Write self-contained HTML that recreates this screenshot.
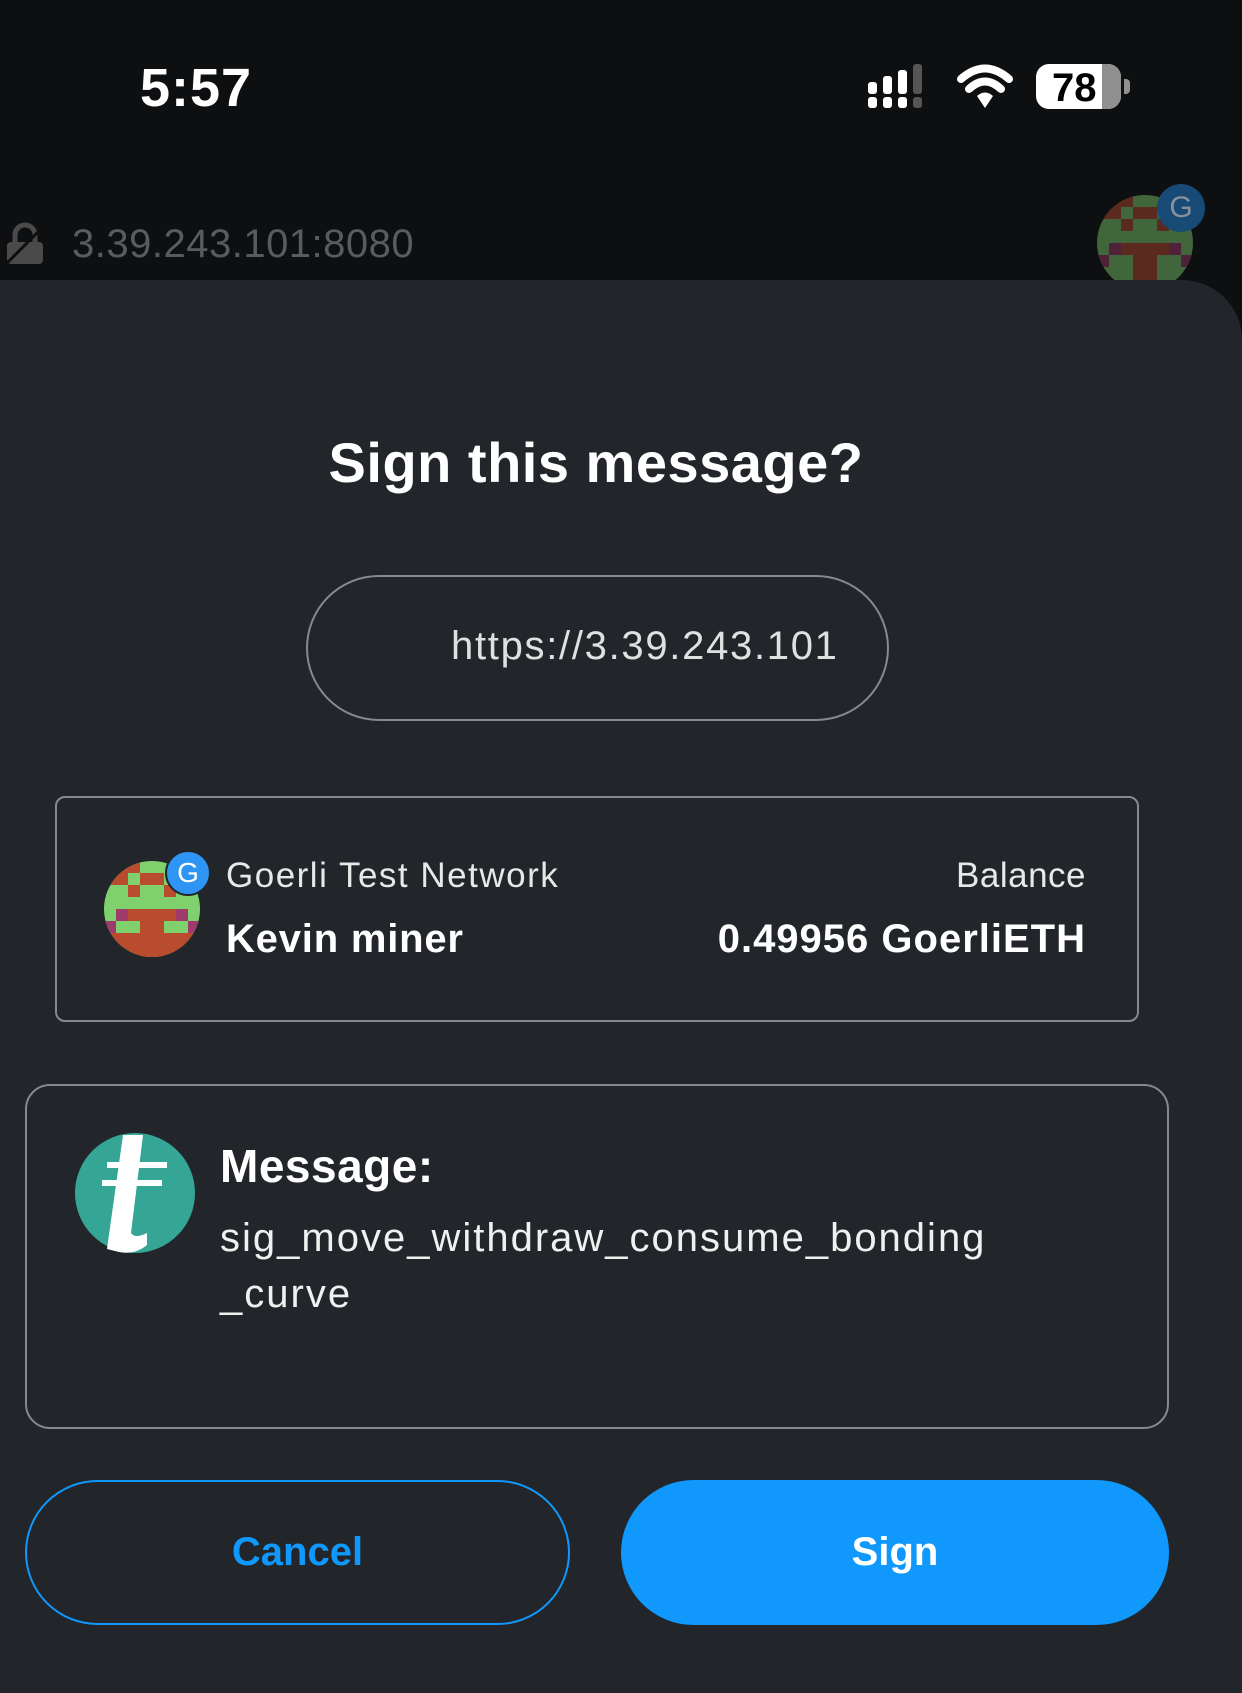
<!DOCTYPE html>
<html><head><meta charset="utf-8"><style>
*{margin:0;padding:0;box-sizing:border-box}
body{width:1242px;height:1693px;background:#0e0f11;font-family:"Liberation Sans",sans-serif;position:relative;overflow:hidden;color:#fff}
.a{position:absolute}
.sheet{left:0;top:280px;width:1242px;height:1413px;background:#222529;border-radius:0 60px 0 0}
</style></head><body>
<div class="a" style="left:140px;top:57px;font-size:54px;font-weight:bold;letter-spacing:1px">5:57</div>
<svg class="a" style="left:866px;top:64px" width="70" height="46" viewBox="0 0 70 46">
<g fill="#fff"><rect x="2" y="18" width="9" height="12" rx="3"/><rect x="2" y="33" width="9" height="11" rx="3"/>
<rect x="17" y="12" width="9" height="18" rx="3"/><rect x="17" y="33" width="9" height="11" rx="3"/>
<rect x="32" y="6" width="9" height="24" rx="3"/><rect x="32" y="33" width="9" height="11" rx="3"/></g>
<g fill="#555"><rect x="47" y="0" width="9" height="30" rx="3"/><rect x="47" y="33" width="9" height="11" rx="3"/></g>
</svg>
<svg class="a" style="left:955px;top:64px" width="60" height="44" viewBox="0 0 60 44">
<path d="M30 44 L22 32 Q30 25 38 32 Z" fill="#fff"/>
<path d="M14 25 Q30 10 46 25" stroke="#fff" stroke-width="8" fill="none" stroke-linecap="round"/>
<path d="M6 15 Q30 -6 54 15" stroke="#fff" stroke-width="8" fill="none" stroke-linecap="round"/>
</svg>
<div class="a" style="left:1036px;top:64px;width:85px;height:45px;border-radius:13px;background:#fff;overflow:hidden">
<div class="a" style="left:66px;top:0;width:20px;height:45px;background:#909090"></div>
<div class="a" style="left:16px;top:2px;font-size:40px;font-weight:bold;color:#000">78</div></div>
<div class="a" style="left:1124px;top:79px;width:6px;height:15px;border-radius:0 4px 4px 0;background:#909090"></div>

<svg class="a" style="left:4px;top:222px" width="44" height="44" viewBox="0 0 44 44"><rect x="3" y="20" width="36" height="22" rx="4" fill="#4a4a4a"/><path d="M11 20 V13 a10 10 0 0 1 20 0 V20" stroke="#4a4a4a" stroke-width="5" fill="none"/><path d="M2 42 L40 4" stroke="#0e0f11" stroke-width="3"/></svg>
<div class="a" style="left:72px;top:222px;font-size:40px;color:#5a5b5e;letter-spacing:0.5px">3.39.243.101:8080</div>

<svg class="a" style="left:1097px;top:195px;opacity:.45" width="96" height="96" viewBox="0 0 8 8"><defs><clipPath id="c1"><circle cx="4" cy="4" r="4"/></clipPath></defs>
<g clip-path="url(#c1)"><rect width="8" height="8" fill="#7fd16e"/><g fill="#b94c2e"><rect x="0" y="0" width="3" height="1"/><rect x="0" y="1" width="2" height="1"/><rect x="3" y="1" width="2" height="1"/><rect x="2" y="2" width="1" height="1"/><rect x="5" y="2" width="1" height="1"/><rect x="2" y="4" width="4" height="1"/><rect x="3" y="5" width="2" height="3"/><rect x="0" y="0" width="1" height="2"/></g><g fill="#a03a6a"><rect x="1" y="4" width="1" height="1"/><rect x="6" y="4" width="1" height="1"/><rect x="0" y="5" width="1" height="1"/><rect x="7" y="5" width="1" height="1"/></g></g></svg>
<div class="a" style="left:1157px;top:184px;width:48px;height:48px;border-radius:50%;background:#174b75;color:#8a9099;font-size:30px;text-align:center;line-height:48px">G</div>

<div class="a sheet"></div>
<div class="a" style="left:0;width:1192px;top:430px;text-align:center;font-size:56px;font-weight:bold;letter-spacing:0.5px">Sign this message?</div>
<div class="a" style="left:306px;top:575px;width:583px;height:146px;border:2px solid #858a90;border-radius:73px"></div>
<div class="a" style="left:451px;top:624px;font-size:40px;color:#e0e0e0;letter-spacing:1.7px">https://3.39.243.101</div>

<div class="a" style="left:55px;top:796px;width:1084px;height:226px;border:2px solid #858a90;border-radius:10px"></div>
<svg class="a" style="left:104px;top:861px" width="96" height="96" viewBox="0 0 8 8"><defs><clipPath id="c2"><circle cx="4" cy="4" r="4"/></clipPath></defs>
<g clip-path="url(#c2)"><rect width="8" height="8" fill="#7fd16e"/><g fill="#b94c2e"><rect x="0" y="0" width="3" height="1"/><rect x="0" y="1" width="2" height="1"/><rect x="3" y="1" width="2" height="1"/><rect x="2" y="2" width="1" height="1"/><rect x="5" y="2" width="1" height="1"/><rect x="2" y="4" width="4" height="1"/><rect x="3" y="5" width="2" height="3"/><rect x="0" y="6" width="8" height="2"/></g><g fill="#a03a6a"><rect x="1" y="4" width="1" height="1"/><rect x="6" y="4" width="1" height="1"/><rect x="0" y="5" width="1" height="1"/><rect x="7" y="5" width="1" height="1"/></g></g></svg>
<div class="a" style="left:165px;top:850px;width:46px;height:46px;border-radius:50%;background:#2f95f5;border:2px solid #222529;color:#fff;font-size:28px;text-align:center;line-height:42px">G</div>
<div class="a" style="left:226px;top:856px;font-size:35px;color:#e8e8e8;letter-spacing:1.5px">Goerli Test Network</div>
<div class="a" style="left:226px;top:917px;font-size:40px;font-weight:bold;letter-spacing:0.8px">Kevin miner</div>
<div class="a" style="right:156px;top:856px;font-size:35px;color:#e8e8e8;letter-spacing:0.5px">Balance</div>
<div class="a" style="right:156px;top:917px;font-size:40px;font-weight:bold;letter-spacing:1px">0.49956 GoerliETH</div>

<div class="a" style="left:25px;top:1084px;width:1144px;height:345px;border:2px solid #858a90;border-radius:25px"></div>
<svg class="a" style="left:75px;top:1133px" width="120" height="120" viewBox="0 0 120 120"><defs><clipPath id="c3"><rect x="-10" y="0" width="140" height="120"/></clipPath></defs><circle cx="60" cy="60" r="60" fill="#35a596"/>
<path d="M48 2 L68 2 L56 100 Q60 106 72 100 L72 112 Q60 122 44 119 L32 116 Z" fill="#fff"/>
<rect x="32" y="29" width="60" height="6" fill="#fff"/><rect x="27" y="47" width="60" height="6" fill="#fff"/></svg>
<div class="a" style="left:220px;top:1139px;font-size:46px;font-weight:bold;letter-spacing:0.5px">Message:</div>
<div class="a" style="left:220px;top:1210px;font-size:40px;line-height:56px;color:#f0f0f0;letter-spacing:2px">sig_move_withdraw_consume_bonding<br>_curve</div>

<div class="a" style="left:25px;top:1480px;width:545px;height:145px;border:2px solid #1098fc;border-radius:73px;color:#1098fc;font-size:40px;font-weight:bold;text-align:center;line-height:141px">Cancel</div>
<div class="a" style="left:621px;top:1480px;width:548px;height:145px;background:#1098fc;border-radius:73px;color:#fff;font-size:40px;font-weight:bold;text-align:center;line-height:145px">Sign</div>
</body></html>
